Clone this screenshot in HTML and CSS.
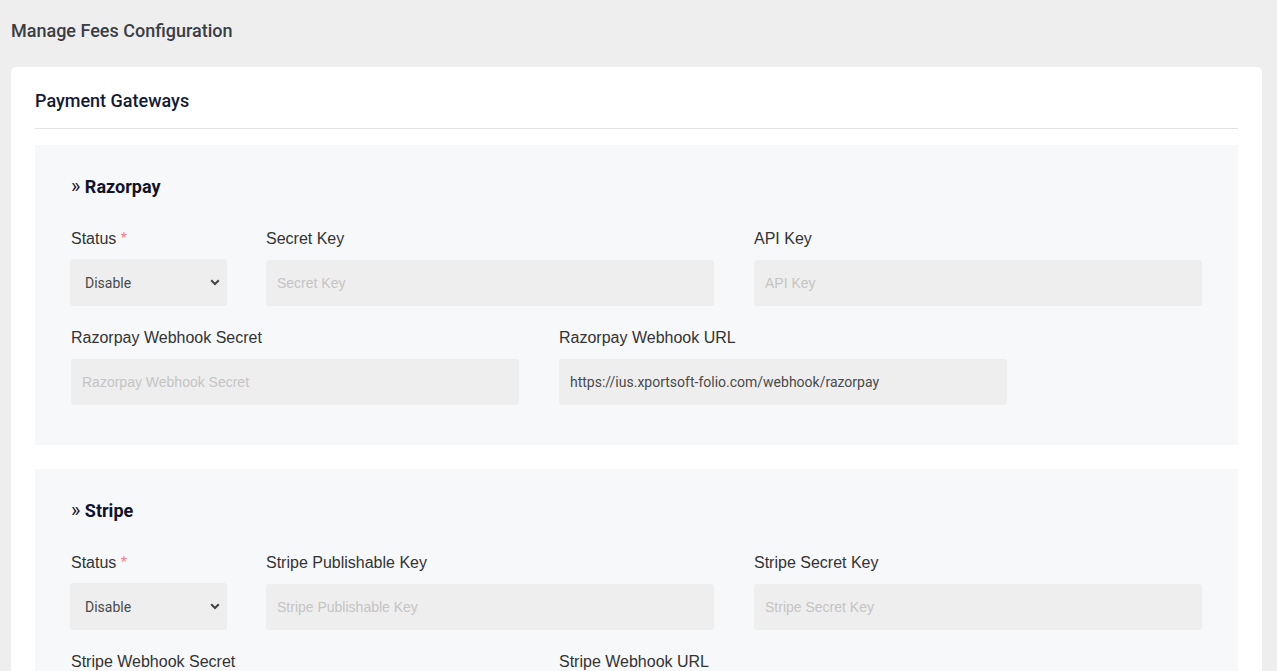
FILE: index.html
```html
<!DOCTYPE html>
<html>
<head>
<meta charset="utf-8">
<title>Manage Fees Configuration</title>
<link rel="stylesheet" href="styles.css">
</head>
<body>
<div class="page">
  <h1 class="page-title">Manage Fees Configuration</h1>
  <div class="card">
    <h2 class="card-title">Payment Gateways</h2>
    <div class="divider"></div>

    <section class="gateway">
      <h3 class="gw-title"><span class="raquo">»</span> Razorpay</h3>
      <div class="row">
        <div class="field field-status">
          <label class="lbl">Status <span class="req">*</span></label>
          <div class="select-wrap">
            <select class="ctl select"><option>Disable</option><option>Enable</option></select>
            <svg class="chev" width="10" height="7" viewBox="0 0 10 7"><path d="M1.2 1.2 L5 5 L8.8 1.2" fill="none" stroke="#444" stroke-width="2"/></svg>
          </div>
        </div>
        <div class="field field-wide">
          <label class="lbl">Secret Key</label>
          <input class="ctl input" placeholder="Secret Key">
        </div>
        <div class="field field-wide">
          <label class="lbl">API Key</label>
          <input class="ctl input" placeholder="API Key">
        </div>
      </div>
      <div class="row row-2">
        <div class="field field-wide">
          <label class="lbl">Razorpay Webhook Secret</label>
          <input class="ctl input" placeholder="Razorpay Webhook Secret">
        </div>
        <div class="field field-wide">
          <label class="lbl">Razorpay Webhook URL</label>
          <input class="ctl input value" value="https://ius.xportsoft-folio.com/webhook/razorpay" readonly>
        </div>
      </div>
    </section>

    <section class="gateway">
      <h3 class="gw-title"><span class="raquo">»</span> Stripe</h3>
      <div class="row">
        <div class="field field-status">
          <label class="lbl">Status <span class="req">*</span></label>
          <div class="select-wrap">
            <select class="ctl select"><option>Disable</option><option>Enable</option></select>
            <svg class="chev" width="10" height="7" viewBox="0 0 10 7"><path d="M1.2 1.2 L5 5 L8.8 1.2" fill="none" stroke="#444" stroke-width="2"/></svg>
          </div>
        </div>
        <div class="field field-wide">
          <label class="lbl">Stripe Publishable Key</label>
          <input class="ctl input" placeholder="Stripe Publishable Key">
        </div>
        <div class="field field-wide">
          <label class="lbl">Stripe Secret Key</label>
          <input class="ctl input" placeholder="Stripe Secret Key">
        </div>
      </div>
      <div class="row row-2">
        <div class="field field-wide">
          <label class="lbl">Stripe Webhook Secret</label>
          <input class="ctl input" placeholder="Stripe Webhook Secret">
        </div>
        <div class="field field-wide">
          <label class="lbl">Stripe Webhook URL</label>
          <input class="ctl input value" value="https://ius.xportsoft-folio.com/webhook/stripe" readonly>
        </div>
      </div>
    </section>
  </div>
</div>
</body>
</html>
```
FILE: styles.css
```css
* { box-sizing: border-box; }
html, body { margin: 0; padding: 0; }
body {
  background: #eeeeee;
  font-family: Roboto, "Liberation Sans", Arial, sans-serif;
  height: 671px;
  overflow: hidden;
}
.page {
  padding: 19px 15px 0 11px;
}
.page-title {
  margin: 0;
  font-size: 18px;
  line-height: 24px;
  font-weight: 500;
  color: #3a3d44;
}
.card {
  margin-top: 24px;
  background: #ffffff;
  border-radius: 5px;
  padding: 22px 24px 24px;
}
.card-title {
  margin: 0;
  font-size: 18px;
  line-height: 24px;
  font-weight: 500;
  color: #141a33;
}
.divider {
  height: 1px;
  background: #e2e2e2;
  margin-top: 15px;
  margin-bottom: 16px;
}
.gateway {
  background: #f7f8fa;
  padding: 29px 36px 40px;
  margin-bottom: 24px;
}
.gw-title {
  margin: 0 0 30px;
  font-size: 18px;
  line-height: 24px;
  font-weight: 700;
  color: #11132a;
}
.raquo {
  font-weight: 400;
  font-size: 20px;
}
.row {
  display: flex;
  gap: 40px;
}
.row-2 {
  margin-top: 22px;
}
.field {
  display: flex;
  flex-direction: column;
}
.field-status { width: 155px; flex: none; }
.field-wide { width: 448px; flex: none; }
.lbl {
  font-family: "Liberation Sans", Arial, sans-serif;
  font-size: 16px;
  line-height: 20px;
  color: #333333;
  margin-bottom: 11px;
}
.req { color: #f07b86; }
.ctl {
  height: 46px;
  border: none;
  border-radius: 3px;
  background: #eeeeee;
  outline: none;
  width: 100%;
}
.input {
  padding: 0 11px;
  font-family: "Liberation Sans", Arial, sans-serif;
  font-size: 14px;
  color: #555555;
}
.input::placeholder { color: #c4c4c4; }
.input.value {
  font-family: Roboto, "Liberation Sans", Arial, sans-serif;
  color: #4a4a4a;
}
.select-wrap {
  position: relative;
  margin-left: -1px;
  margin-top: -1px;
}
.select {
  appearance: none;
  -webkit-appearance: none;
  height: 47px;
  width: 157px;
  padding: 0 15px;
  font-family: Roboto, "Liberation Sans", Arial, sans-serif;
  font-size: 14px;
  color: #4a4a4a;
}
.chev {
  position: absolute;
  right: 6px;
  top: 20px;
  pointer-events: none;
}
```
